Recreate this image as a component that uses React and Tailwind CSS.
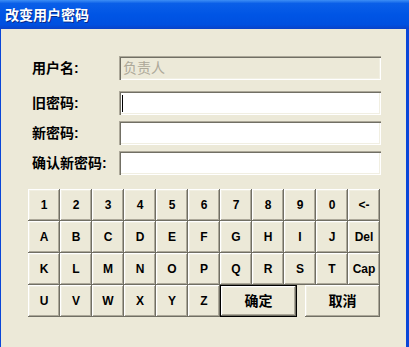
import React from "react";

const keyRows = [
  ["1", "2", "3", "4", "5", "6", "7", "8", "9", "0", "<-"],
  ["A", "B", "C", "D", "E", "F", "G", "H", "I", "J", "Del"],
  ["K", "L", "M", "N", "O", "P", "Q", "R", "S", "T", "Cap"],
];
const lastRow = ["U", "V", "W", "X", "Y", "Z"];

const raised =
  "shadow-[inset_-1px_-1px_0_#716f64,inset_1px_1px_0_#ffffff,inset_-2px_-2px_0_#aca899,inset_2px_2px_0_#f1efe2]";
const sunken =
  "shadow-[inset_1px_1px_0_#aca899,inset_2px_2px_0_#716f64,inset_-1px_-1px_0_#ffffff,inset_-2px_-2px_0_#f1efe2]";

function Key({ label }) {
  return (
    <button
      className={`w-[32px] h-[32px] bg-[#ece9d8] flex items-center justify-center text-[12px] font-bold text-black ${raised}`}
    >
      {label}
    </button>
  );
}

function Field({ label, children, className = "" }) {
  return (
    <div className={`flex items-center pl-[4px] ${className}`}>
      <span className="w-[87px] text-[14px] font-bold text-black leading-none">
        {label}
      </span>
      {children}
    </div>
  );
}

export default function App() {
  return (
    <div className="w-[409px] h-[347px] flex flex-col bg-[#0a46d8] overflow-hidden font-['Liberation_Sans','Noto_Sans_CJK_SC',sans-serif]">
      {/* title bar */}
      <div className="h-[29px] shrink-0 flex items-center pl-[5px] bg-[linear-gradient(to_bottom,#3d8ef5_0%,#0a5fe8_12%,#0055e5_50%,#0050e0_85%,#0a42c8_100%)]">
        <span className="text-white text-[14px] font-bold [text-shadow:1px_1px_0_#0a2a8a] font-['Noto_Sans_CJK_SC',sans-serif]">
          改变用户密码
        </span>
      </div>

      {/* body */}
      <div className="flex-1 ml-[1px] mr-[3px] bg-[#ece9d8] pl-[27px] font-['Liberation_Sans','Noto_Sans_CJK_SC',sans-serif]">
        <Field label="用户名:" className="mt-[27px]">
          <div
            className={`w-[262px] h-[24px] bg-[#ece9d8] flex items-center pl-[4px] text-[14px] text-[#aca899] ${sunken}`}
          >
            负责人
          </div>
        </Field>
        <Field label="旧密码:" className="mt-[11px]">
          <div className={`w-[262px] h-[24px] bg-white flex items-center pl-[3px] ${sunken}`}>
            <span className="w-px h-[17px] bg-black"></span>
          </div>
        </Field>
        <Field label="新密码:" className="mt-[6px]">
          <div className={`w-[262px] h-[24px] bg-white ${sunken}`}></div>
        </Field>
        <Field label="确认新密码:" className="mt-[6px]">
          <div className={`w-[262px] h-[24px] bg-white ${sunken}`}></div>
        </Field>

        {/* keypad */}
        <div className="mt-[14px] flex flex-col">
          {keyRows.map((row, i) => (
            <div key={i} className="flex">
              {row.map((k) => (
                <Key key={k} label={k} />
              ))}
            </div>
          ))}
          <div className="flex">
            {lastRow.map((k) => (
              <Key key={k} label={k} />
            ))}
            <button className="w-[77px] h-[32px] border border-black bg-[#ece9d8] p-0">
              <div
                className={`w-full h-full flex items-center justify-center text-[14px] font-bold text-black ${raised}`}
              >
                确定
              </div>
            </button>
            <button
              className={`ml-[8px] w-[75px] h-[32px] bg-[#ece9d8] flex items-center justify-center text-[14px] font-bold text-black ${raised}`}
            >
              取消
            </button>
          </div>
        </div>
      </div>
    </div>
  );
}
